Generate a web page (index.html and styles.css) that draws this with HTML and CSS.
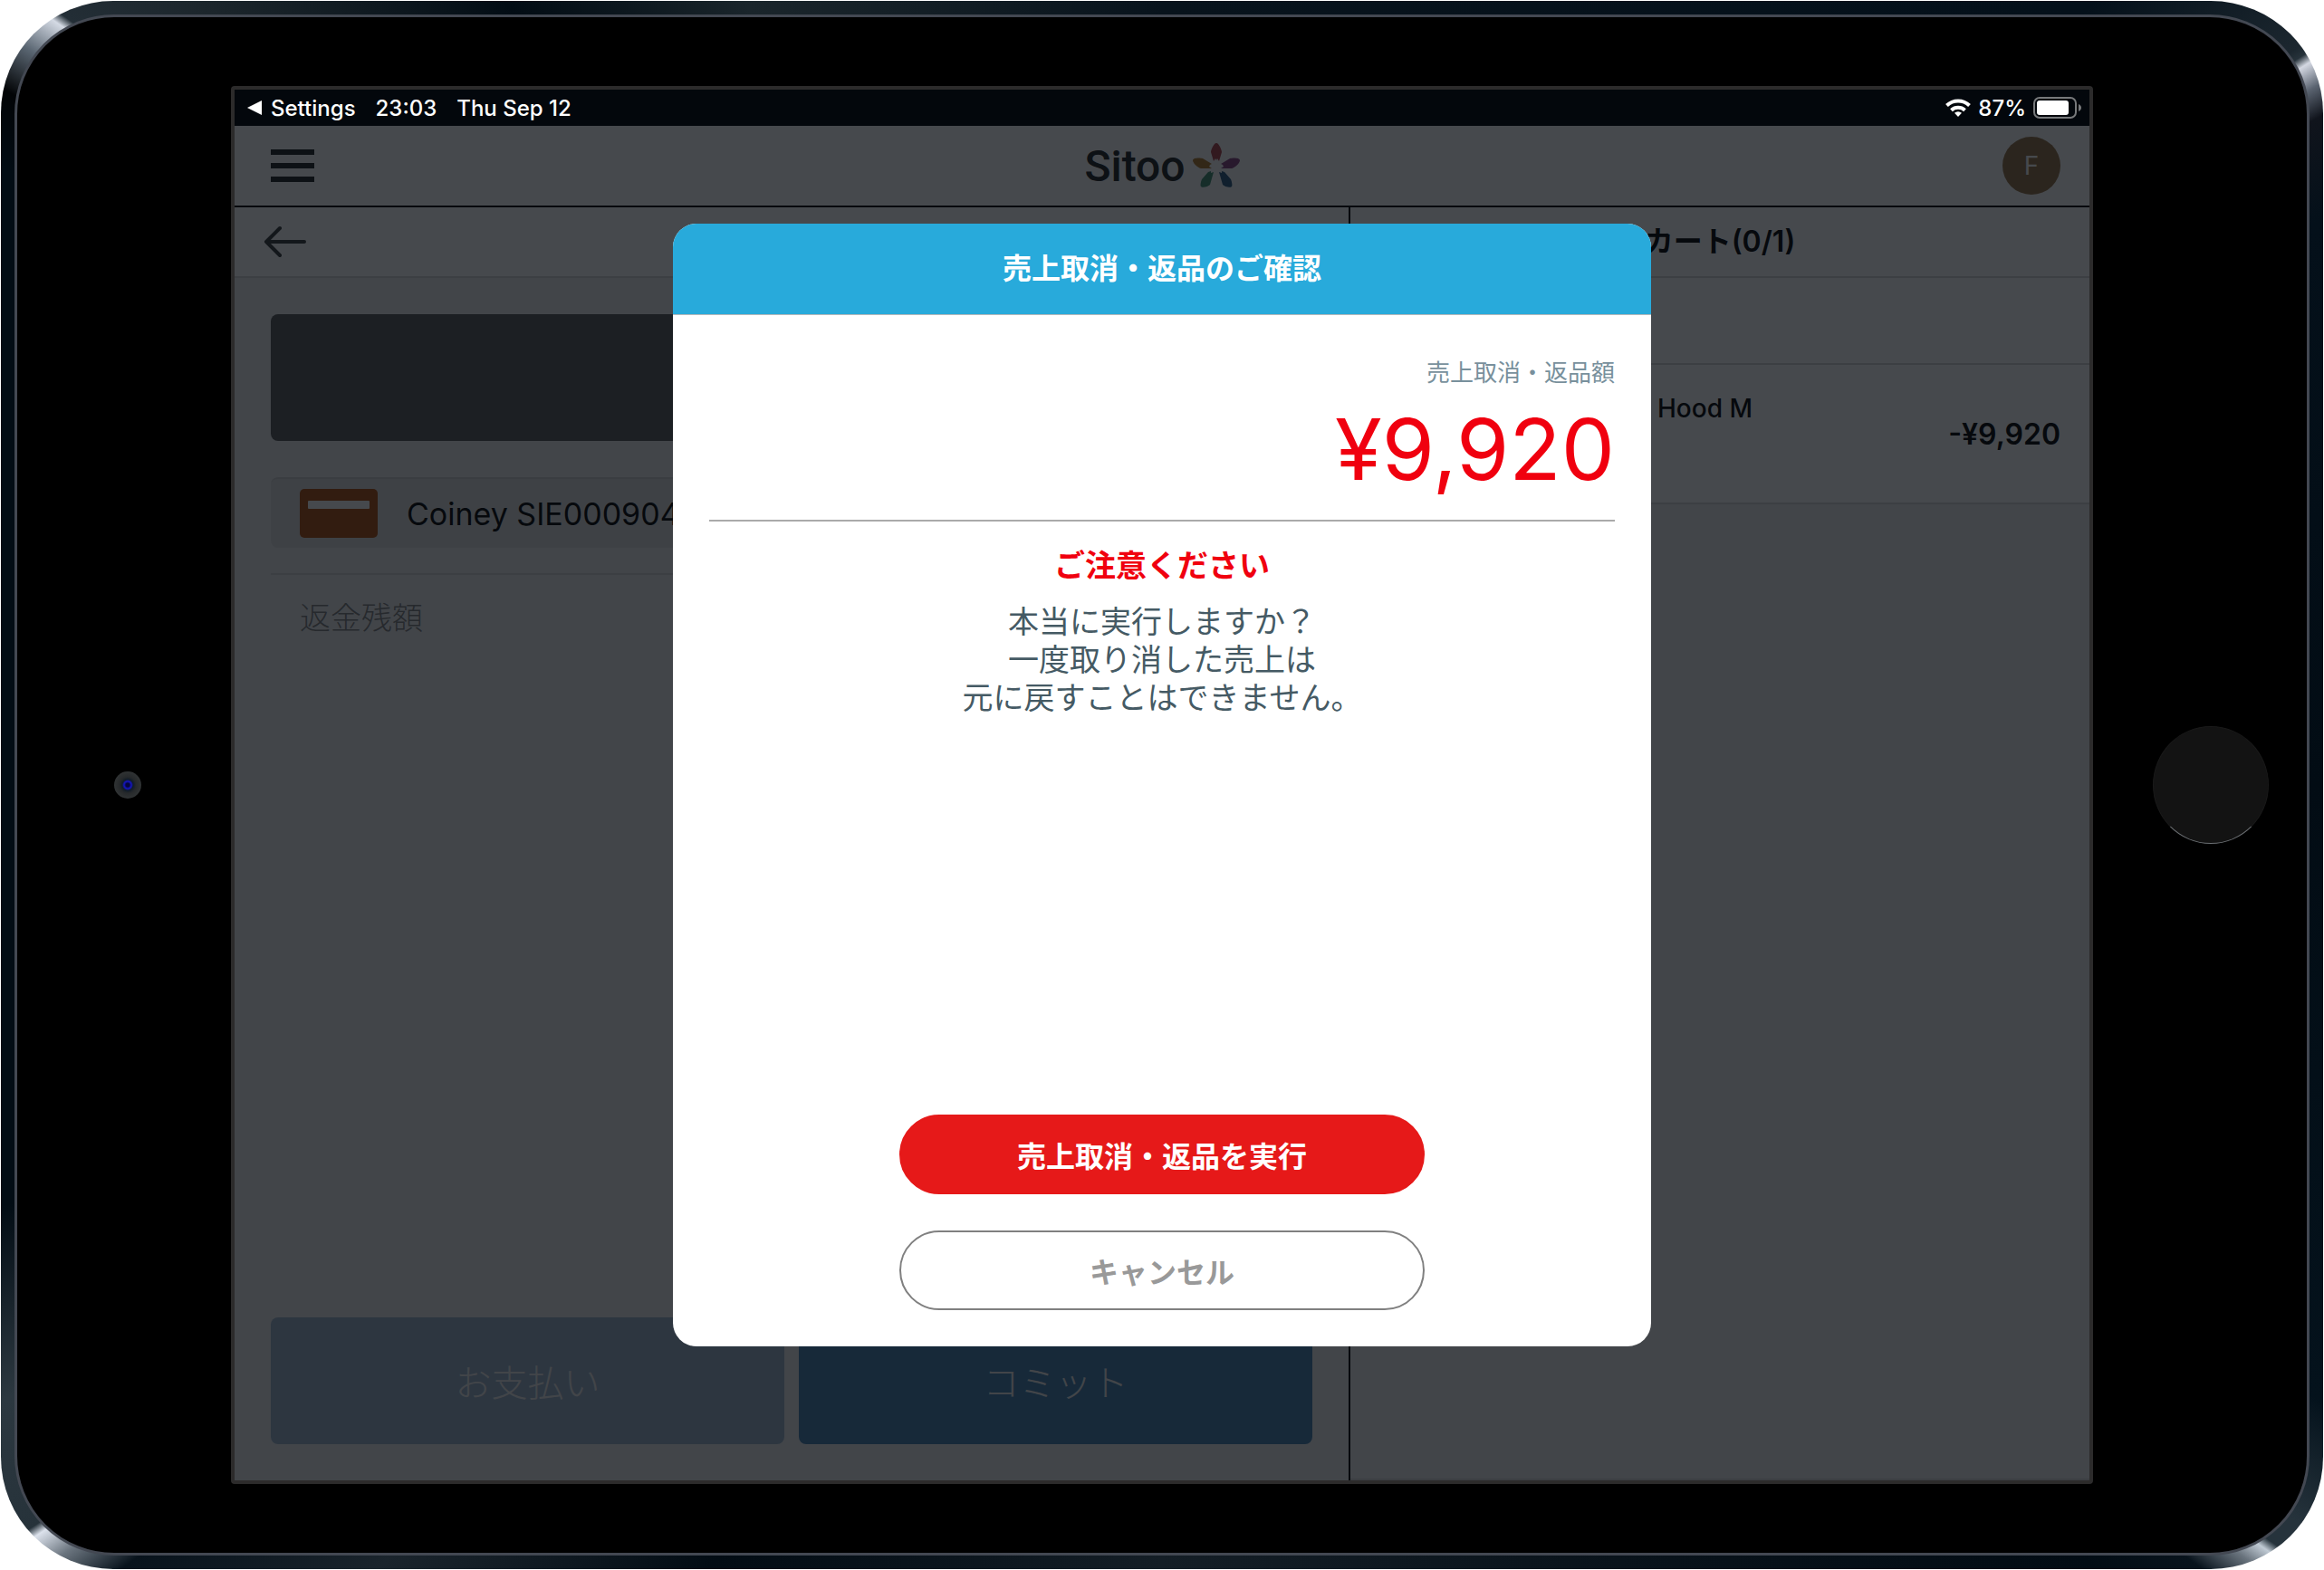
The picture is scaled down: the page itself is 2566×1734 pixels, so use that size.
FILE: index.html
```html
<!DOCTYPE html>
<html lang="ja">
<head>
    <meta charset="UTF-8">
    <meta name="viewport" content="width=device-width, initial-scale=1.0">
    <title>売上取消・返品のご確認</title>
    <link rel="stylesheet" href="styles.css">
</head>
<body>
    <div class="device">
        <div class="bezel">
            <div class="camera"></div>

            <div class="screen">
                <div class="status-bar">
                    <a class="status-back" href="#">
                        <svg width="16" height="16" viewBox="0 0 16 16"><path d="M0 8 16 0v16z" fill="#fff"/></svg>
                        Settings
                    </a>
                    <span>23:03</span>
                    <span>Thu Sep 12</span>
                    <div class="status-right">
                        <svg width="28" height="20" viewBox="0 0 28 20" fill="none" stroke="#fff" stroke-width="4">
                            <path d="M1.5 7.5a18 18 0 0 1 25 0"/>
                            <path d="M6.5 12.7a11 11 0 0 1 15 0"/>
                            <path d="M14 20l-4-4.200a6 6 0 0 1 8 0z" fill="#fff" stroke="none"/>
                        </svg>
                        <span>87%</span>
                        <svg width="54" height="24" viewBox="0 0 54 24">
                            <rect x="1" y="1" width="46" height="22" rx="6" fill="none" stroke="#77797b" stroke-width="2"/>
                            <rect x="4" y="4" width="35" height="16" rx="3" fill="#fff"/>
                            <path d="M50 8c4 1.500 4 6.500 0 8z" fill="#77797b"/>
                        </svg>
                    </div>
                </div>

                <div class="app">
                    <header class="app-header">
                        <button class="menu-button" type="button" aria-label="Menu">
                            <svg width="48" height="36" viewBox="0 0 48 36"><path d="M0 0h48v6H0zM0 15h48v6H0zM0 30h48v6H0z" fill="#1c2020"/></svg>
                        </button>
                        <div class="logo">
                            <span>Sitoo</span>
                            <svg width="52" height="50" viewBox="0 0 52 50">
                                <path d="M26 0c3 0 6 8 6 10l-3 10-2-3-1 2-1-2-2 3-3-10c0-2 3-10 6-10z" fill="#b04048"/>
                                <path d="M52 19c0 3-5 8-9 9H31l3-2-1-2-2-1 10-6c3-1 11-1 11 2z" fill="#884080"/>
                                <path d="M43 48c-2 2-8 0-10-2l-4-14 3 1v-2l3 1 7 8c1 2 2 7 1 8z" fill="#285880"/>
                                <path d="M9 48c2 2 8 0 10-2l4-14-3 1v-2l-3 1-7 8c-1 2-2 7-1 8z" fill="#409070"/>
                                <path d="M0 19c0 3 5 8 9 9h12l-3-2 1-2 2-1-10-6c-3-1-11-1-11 2z" fill="#b07828"/>
                            </svg>
                        </div>
                        <div class="avatar">F</div>
                    </header>

                    <div class="panes">
                        <main class="payment-pane">
                            <div class="pane-bar">
                                <button class="back-button" type="button" aria-label="戻る">
                                    <svg width="48" height="36" viewBox="0 0 48 36" fill="none" stroke="#343838" stroke-width="4" stroke-linecap="round" stroke-linejoin="round"><path d="M45 18H3M18 3 3 18l15 15"/></svg>
                                </button>
                            </div>
                            <div class="payment-body">
                                <div class="amount-box"></div>
                                <div class="terminal-row">
                                    <svg width="86" height="54" viewBox="0 0 86 54">
                                        <rect width="86" height="54" rx="5" fill="#b04c0c"/>
                                        <rect x="9" y="13" width="68" height="9" rx="1" fill="#fff"/>
                                    </svg>
                                    <span>Coiney SIE000904</span>
                                </div>
                                <div class="remaining">返金残額</div>
                                <div class="pane-actions">
                                    <button class="pane-button pane-button-disabled" type="button">お支払い</button>
                                    <button class="pane-button" type="button">コミット</button>
                                </div>
                            </div>
                        </main>

                        <aside class="cart-pane">
                            <h2 class="cart-title">カート(0/1)</h2>
                            <div class="cart-customer"></div>
                            <div class="cart-item">
                                <span class="item-name">Hood M</span>
                                <span class="item-price">-¥9,920</span>
                            </div>
                        </aside>
                    </div>
                </div>

                <div class="overlay">
                    <section class="dialog" role="dialog" aria-labelledby="dialogTitle">
                        <h1 class="dialog-title" id="dialogTitle">売上取消・返品のご確認</h1>
                        <div class="dialog-body">
                            <div class="refund">
                                <p class="refund-label">売上取消・返品額</p>
                                <p class="refund-amount">¥9,920</p>
                            </div>
                            <p class="warning-title">ご注意ください</p>
                            <p class="warning-text">本当に実行しますか？<br>一度取り消した売上は<br>元に戻すことはできません。</p>
                            <div class="dialog-actions">
                                <button class="dialog-button dialog-button-danger" type="button">売上取消・返品を実行</button>
                                <button class="dialog-button" type="button">キャンセル</button>
                            </div>
                        </div>
                    </section>
                </div>
            </div>

            <div class="home-button"></div>
        </div>
    </div>
</body>
</html>
```
FILE: styles.css
```css
* {
    box-sizing: border-box;
}

body {
    margin: 0;
    padding: 1px;
    min-height: 100vh;
    display: flex;
    background-color: #fff;
    font-family: Inter, "Noto Sans CJK JP", sans-serif;
}

h1, h2, p {
    margin: 0;
}

button {
    padding: 0;
    border: none;
    background: none;
    font-family: inherit;
    cursor: pointer;
}

svg {
    display: block;
    flex-shrink: 0;
}

/* Tablet frame */
.device {
    flex: 1;
    display: flex;
    padding: 15px;
    border-radius: 124px;
    /* metal edge with a highlight in each corner */
    background: conic-gradient(
        #08131c 0deg, #04101a 50deg, #1c272f 57deg, #26323a 57.4deg,
        #d4d8e2 57.8deg, #5a6370 58.8deg, #10141c 60deg, #04101a 64deg,
        #020c14 90deg, #04121c 118deg, #26333c 123deg, #26333c 124.3deg,
        #c0cad4 124.7deg, #6a747e 125.5deg, #08131c 127deg, #020c14 130deg,
        #141e26 180deg, #020c14 210deg, #1a242c 225deg, #08131c 233deg,
        #6a747e 235deg, #dce2ec 236.3deg, #26323a 236.7deg, #2c3840 242deg,
        #020c14 250deg, #020c14 298deg, #020406 301deg, #5a6672 303deg,
        #d4dae4 304.6deg, #232e36 305deg, #1c262c 309deg, #020c14 320deg,
        #1a252b 332deg, #08131c 360deg
    );
}

.bezel {
    flex: 1;
    display: grid;
    grid-template-columns: 236px 1fr 236px;
    align-items: center;
    justify-items: center;
    padding: 76px 0;
    border: 3px solid #434852;
    border-radius: 110px;
    background-color: #000;
}

.camera {
    width: 30px;
    height: 30px;
    margin-left: 8px;
    border-radius: 50%;
    background: radial-gradient(circle, #06063c 2px, #1414c8 4px, #101c28 6px, #26292b 9px, #303334 15px);
}

.home-button {
    width: 128px;
    height: 130px;
    margin-left: 24px;
    border: 1px solid #1a1a1a;
    border-bottom-color: #6c7074;
    border-radius: 50%;
    background-color: #131313;
}

.screen {
    position: relative;
    align-self: stretch;
    justify-self: stretch;
    display: flex;
    flex-direction: column;
    border: 4px solid #2c2b2b;
    border-radius: 4px;
    background-color: #03070c;
}

.status-bar {
    display: flex;
    align-items: center;
    gap: 22px;
    height: 40px;
    padding: 0 8px 0 14px;
    color: #fff;
    font-size: 24px;
    font-weight: 500;
}

.status-back {
    display: flex;
    align-items: center;
    gap: 10px;
    color: inherit;
    text-decoration: none;
}

.status-right {
    display: flex;
    align-items: center;
    gap: 8px;
    margin-left: auto;
}

/* Point of sale app */
.app {
    flex: 1;
    display: flex;
    flex-direction: column;
    color: #000;
}

.app-header {
    display: grid;
    grid-template-columns: 1fr auto 1fr;
    align-items: center;
    height: 90px;
    padding: 0 32px;
    border-bottom: 2px solid #000;
    background-color: #fff;
}

.menu-button {
    justify-self: start;
    padding-left: 8px;
}

.logo {
    display: flex;
    align-items: center;
    gap: 8px;
    color: #1c2020;
    font-family: Roboto, sans-serif;
    font-size: 48px;
    font-weight: 500;
}

.avatar {
    justify-self: end;
    width: 64px;
    height: 64px;
    border-radius: 50%;
    background-color: #947044;
    color: #fff;
    font-size: 28px;
    line-height: 64px;
    text-align: center;
}

.panes {
    flex: 1;
    display: grid;
    grid-template-columns: 1fr 816px;
}

.payment-pane {
    display: flex;
    flex-direction: column;
    border-right: 2px solid #000;
    background-color: #f0f0f0;
}

.pane-bar {
    display: flex;
    align-items: center;
    height: 78px;
    padding: 0 32px;
    border-bottom: 2px solid #d8d8d8;
    background-color: #fff;
}

.payment-body {
    flex: 1;
    display: flex;
    flex-direction: column;
    padding: 40px;
}

.amount-box {
    height: 140px;
    border-radius: 8px;
    background-color: #585858;
}

.terminal-row {
    display: flex;
    align-items: center;
    gap: 32px;
    height: 78px;
    margin-top: 40px;
    padding: 0 32px;
    border-top: 2px solid #d0d0d0;
    border-radius: 8px;
    background-color: #e0e0e0;
    font-size: 34px;
}

.remaining {
    margin-top: 28px;
    padding: 24px 32px;
    border-top: 2px solid #d8d8d8;
    color: #808080;
    font-size: 34px;
    font-weight: 300;
    line-height: 48px;
}

.pane-actions {
    display: flex;
    gap: 16px;
    margin-top: auto;
}

.pane-button {
    flex: 1;
    height: 140px;
    border-radius: 8px;
    background-color: #4480b0;
    color: #f0f0f0;
    font-size: 40px;
    font-weight: 300;
}

.pane-button-disabled {
    background-color: #9cb4cc;
}

.cart-pane {
    border-bottom: 2px solid #d8d8d8;
    background-color: #f0f0f0;
}

.cart-title {
    height: 78px;
    border-bottom: 2px solid #d8d8d8;
    background-color: #fff;
    font-size: 32px;
    font-weight: 600;
    line-height: 76px;
    text-align: center;
}

.cart-customer {
    height: 96px;
    border-bottom: 2px solid #d8d8d8;
    background-color: #fff;
}

.cart-item {
    display: flex;
    align-items: center;
    justify-content: space-between;
    height: 154px;
    padding: 0 32px;
    border-bottom: 2px solid #d8d8d8;
    background-color: #fff;
    font-weight: 500;
}

/* name column ends well before the price */
.item-name {
    align-self: flex-start;
    width: 412px;
    padding-top: 28px;
    font-size: 28px;
    line-height: 40px;
    text-align: right;
}

.item-price {
    font-size: 32px;
    font-weight: 600;
}

/* Confirmation dialog */
.overlay {
    position: absolute;
    inset: 40px 0 0;
    display: flex;
    align-items: stretch;
    justify-content: center;
    padding: 108px 0 148px;
    background-color: rgba(8, 12, 18, 0.75);
}

.dialog {
    display: flex;
    flex-direction: column;
    width: 1080px;
    max-width: 90%;
    overflow: hidden;
    border-radius: 26px;
    background-color: #fff;
}

.dialog-title {
    height: 101px;
    border-bottom: 1px solid #b4b8ba;
    background-color: #28aadb;
    color: #fff;
    font-size: 32px;
    font-weight: 700;
    line-height: 100px;
    text-align: center;
}

.dialog-body {
    flex: 1;
    display: flex;
    flex-direction: column;
    padding: 40px;
    text-align: center;
}

.refund {
    padding-bottom: 18px;
    border-bottom: 2px solid #aaa;
    text-align: right;
}

.refund-label {
    color: #78909c;
    font-size: 26px;
    line-height: 48px;
}

.refund-amount {
    color: #f0000f;
    font-size: 94px;
    line-height: 120px;
}

.warning-title {
    margin-top: 28px;
    color: #f0000f;
    font-size: 34px;
    font-weight: 700;
    line-height: 42px;
}

.warning-text {
    margin-top: 20px;
    color: #455a64;
    font-size: 34px;
    line-height: 42px;
}

.dialog-actions {
    display: flex;
    flex-direction: column;
    align-items: center;
    gap: 40px;
    margin-top: auto;
}

.dialog-button {
    width: 580px;
    max-width: 100%;
    height: 88px;
    border: 2px solid #808080;
    border-radius: 44px;
    color: #999;
    font-size: 32px;
    font-weight: 700;
}

.dialog-button-danger {
    border-color: #e61919;
    background-color: #e61919;
    color: #fff;
}
```
